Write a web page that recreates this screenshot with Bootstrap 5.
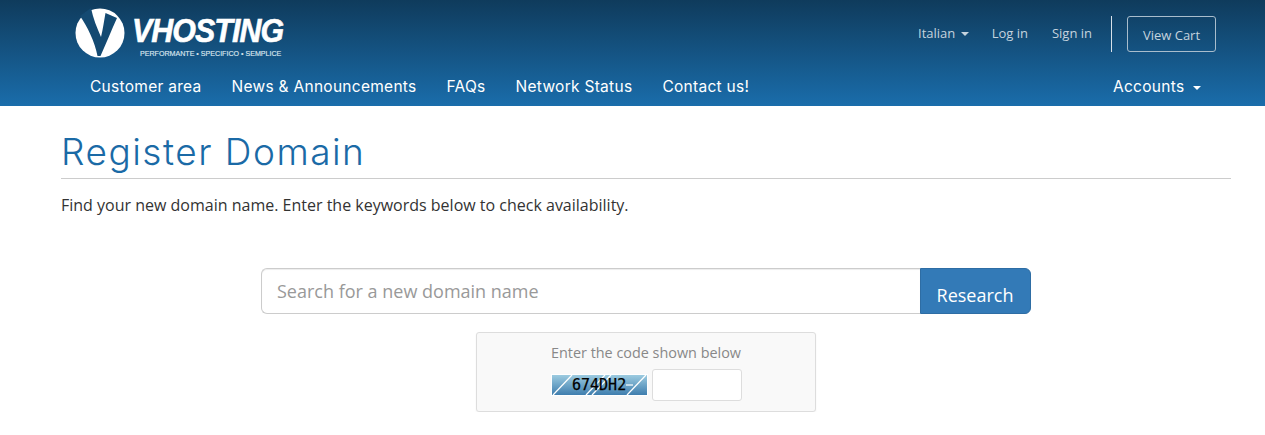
<!DOCTYPE html>
<html lang="en">
<head>
    <meta charset="UTF-8">
    <meta name="viewport" content="width=device-width, initial-scale=1.0">
    <title>Register Domain</title>
    <link rel="stylesheet" href="https://cdn.jsdelivr.net/npm/bootstrap@5.3.0/dist/css/bootstrap.min.css">
    <style>
        body { font-family: "Open Sans", sans-serif; font-size: 16px; color: #333; background: #fff; overflow: hidden; }
        .site-head { height: 106px; background: linear-gradient(to bottom, #0f3b5c, #1a6dab); }
        .head-top { height: 67px; padding: 0 49px 0 75px; }
        .brand-logo { gap: 7px; color: #fff; padding-top: 8px; align-self: flex-start; }
        .brand-name { font-family: "Liberation Sans", sans-serif; font-weight: 700; font-style: italic; font-size: 33px; line-height: 32px; letter-spacing: -1px; margin-top: 7px; -webkit-text-stroke: .6px #fff; transform: scaleX(.92); transform-origin: left center; }
        .brand-tag { font-family: "Liberation Sans", sans-serif; font-size: 7.1px; line-height: 10px; color: #dbe6ee; margin-left: 8px; margin-top: 2px; white-space: nowrap; -webkit-text-stroke: .15px #dbe6ee; }
        .top-links { gap: 24px; font-size: 13px; color: #c5d3de; }
        .top-links a { color: #c5d3de; text-decoration: none; }
        .lang-link { margin-right: -1px; }
        .lang-link .caret-down { margin-left: 2px; }
        .top-sep { width: 1px; height: 36px; background: #d7e1e9; margin: 0 -9px 0 -5px; }
        .cart-btn { width: 89px; height: 36px; border: 1px solid #a9bdcc; border-radius: 3px; color: #c5d3de; font-size: 13px; padding-top: 5px; }
        .caret-down { display: inline-block; width: 0; height: 0; border-left: 4px solid transparent; border-right: 4px solid transparent; border-top: 4px solid currentColor; vertical-align: middle; }
        .main-nav { height: 39px; padding: 0 64px 0 90px; font-family: Inter, sans-serif; font-size: 15.5px; letter-spacing: .28px; color: #fff; }
        .main-nav a { color: #fff; text-decoration: none; }
        .nav-left { gap: 30px; }
        .page-body { padding: 0 34px 0 61px; }
        .page-title { font-family: Inter, sans-serif; font-weight: 300; font-size: 37px; line-height: 40px; letter-spacing: 1.5px; color: #1a6aa6; margin: 26px 0 0; padding-bottom: 6px; border-bottom: 1px solid #ccc; }
        .page-sub { font-size: 16px; line-height: 22px; margin: 15px 0 52px; color: #333; }
        .domain-search { width: 770px; height: 46px; }
        .domain-input { flex: 1; border: 1px solid #ccc; border-right: 0; border-radius: 6px 0 0 6px; padding: 0 15px; font-size: 18px; font-family: inherit; color: #333; box-shadow: inset 0 1px 1px rgba(0,0,0,.075); outline: 0; }
        .domain-input::placeholder { color: #999; opacity: 1; }
        .domain-btn { width: 111px; background: #337ab7; border: 1px solid #2e6da4; border-radius: 0 6px 6px 0; color: #fff; font-size: 18px; padding: 9px 1px 0 0; }
        .captcha-box { width: 340px; height: 80px; margin-top: 18px; background: #f9f9f9; border: 1px solid #ddd; border-radius: 3px; box-shadow: 0 1px 2px rgba(0,0,0,.05); color: #888; font-size: 14.4px; line-height: 20px; padding-top: 10px; }
        .captcha-row { gap: 4px; margin-top: 6px; }
        .captcha-pic { width: 97px; height: 22px; }
        .captcha-pic text { font-family: "DejaVu Sans Mono", monospace; font-size: 15px; fill: #000; stroke: #000; stroke-width: .25px; }
        .captcha-input { width: 90px; height: 32px; border: 1px solid #ddd; border-radius: 3px; background: #fff; outline: 0; }
    </style>
</head>
<body>

    <header class="site-head">
        <div class="head-top d-flex justify-content-between align-items-center">
            <div class="brand-logo d-flex">
                <svg width="50" height="50" viewBox="0 0 50 50" aria-hidden="true">
                    <circle cx="25" cy="25" r="24.5" fill="#fff"/>
                    <path d="M5 8 L16 0 C18 10 22 20 26 29 C28 21 29 13 30.5 5 L42 10 C36 23 31 36 25.5 48 L22.5 48 C20 34 12 18 5 8 Z" fill="#144a72"/>
                </svg>
                <div>
                    <div class="brand-name">VHOSTING</div>
                    <div class="brand-tag">PERFORMANTE • SPECIFICO • SEMPLICE</div>
                </div>
            </div>
            <div class="top-links d-flex align-items-center">
                <a href="#" class="lang-link">Italian <span class="caret-down"></span></a>
                <a href="#">Log in</a>
                <a href="#">Sign in</a>
                <span class="top-sep"></span>
                <a href="#" class="cart-btn d-flex align-items-center justify-content-center">View Cart</a>
            </div>
        </div>
        <nav class="main-nav d-flex justify-content-between align-items-center">
            <div class="nav-left d-flex">
                <a href="#">Customer area</a>
                <a href="#">News &amp; Announcements</a>
                <a href="#">FAQs</a>
                <a href="#">Network Status</a>
                <a href="#">Contact us!</a>
            </div>
            <a href="#">Accounts <span class="caret-down ms-1"></span></a>
        </nav>
    </header>

    <main class="page-body">
        <h1 class="page-title">Register Domain</h1>
        <p class="page-sub">Find your new domain name. Enter the keywords below to check availability.</p>

        <form class="d-flex flex-column align-items-center">
            <div class="domain-search d-flex">
                <input class="domain-input" type="text" placeholder="Search for a new domain name">
                <button class="domain-btn" type="button">Research</button>
            </div>
            <div class="captcha-box text-center">
                <div>Enter the code shown below</div>
                <div class="captcha-row d-flex justify-content-center align-items-center">
                    <svg class="captcha-pic" viewBox="0 0 97 22" aria-label="674DH2">
                        <defs>
                            <linearGradient id="capt" x1="0" y1="0" x2="0" y2="1">
                                <stop offset="0" stop-color="#9ccbe0"/>
                                <stop offset="1" stop-color="#3f7eae"/>
                            </linearGradient>
                        </defs>
                        <rect width="97" height="22" fill="#fff"/>
                        <rect x="1" y="1" width="95" height="20" fill="url(#capt)"/>
                        <g stroke="#fff" stroke-width="1.2">
                            <path d="M2 21 L21 1"/>
                            <path d="M35 21 L54 1"/>
                            <path d="M41 21 L60 1"/>
                            <path d="M76 21 L95 1"/>
                            <path d="M75 11 L82 11"/>
                        </g>
                        <text x="21" y="16">674DH2</text>
                    </svg>
                    <input class="captcha-input" type="text" aria-label="Captcha code">
                </div>
            </div>
        </form>
    </main>

</body>
</html>
